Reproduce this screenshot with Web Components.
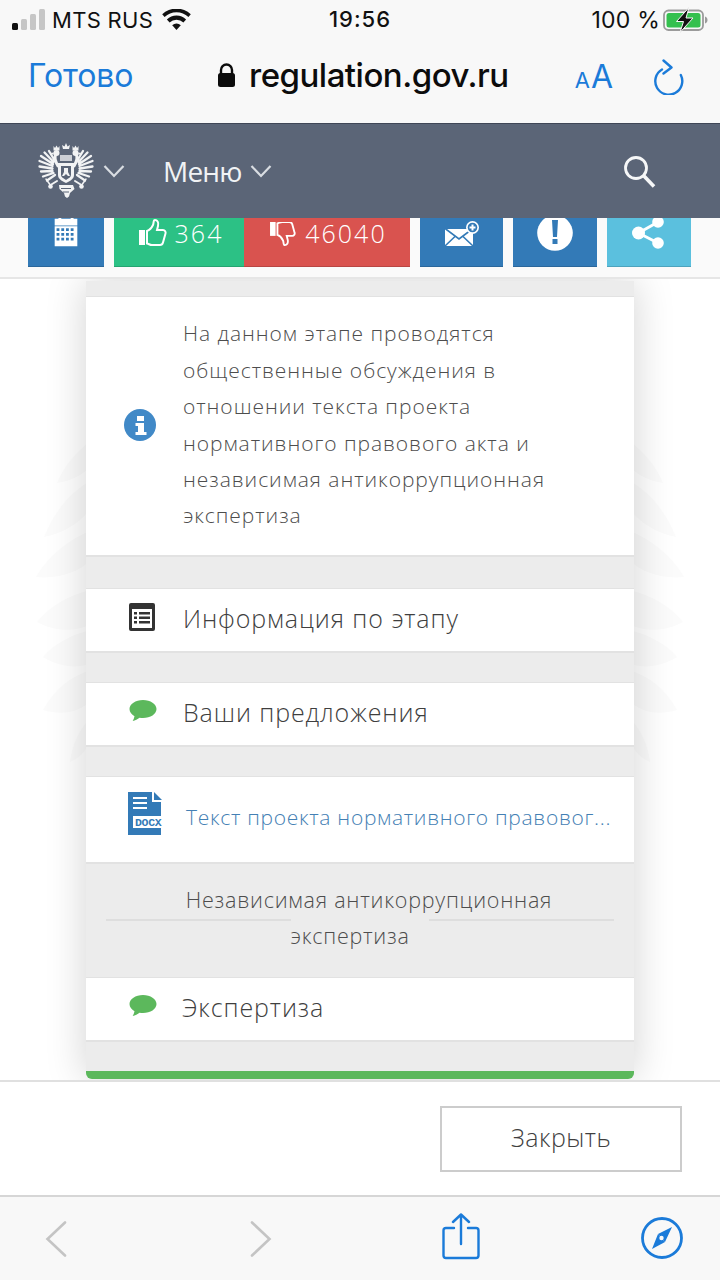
<!DOCTYPE html>
<html lang="ru">
<head>
<meta charset="UTF-8" />
<title>regulation.gov.ru</title>
<style>
  html, body { margin: 0; height: 100%; }
  body {
    width: 720px;
    height: 1280px;
    overflow: hidden;
    display: flex;
    flex-direction: column;
    font-family: "Open Sans", "Liberation Sans", sans-serif;
    background: #fff;
  }
</style>
</head>
<body>
  <ios-status></ios-status>
  <safari-top></safari-top>
  <site-header></site-header>
  <action-bar></action-bar>
  <modal-body>
    <stage-card>
      <card-spacer h="15"></card-spacer>
      <info-row></info-row>
      <card-spacer h="31"></card-spacer>
      <link-row icon="list">Информация по этапу</link-row>
      <card-spacer h="29"></card-spacer>
      <link-row icon="chat">Ваши предложения</link-row>
      <card-spacer h="29"></card-spacer>
      <doc-row>Текст проекта нормативного правовог...</doc-row>
      <section-title>Независимая антикоррупционная экспертиза</section-title>
      <link-row icon="chat" shift="-1">Экспертиза</link-row>
      <card-spacer h="29"></card-spacer>
      <green-bar></green-bar>
    </stage-card>
  </modal-body>
  <modal-footer></modal-footer>
  <safari-bottom></safari-bottom>

<script>
  // helper, every element has the same boilerplate
  function def(name, html) {
    customElements.define(name, class extends HTMLElement {
      constructor() {
        super();
        this.attachShadow({ mode: 'open' }).innerHTML = html;
      }
    });
  }

  const BLUE = '#1b7bd9';

  def('ios-status', `
    <style>
      :host { display: flex; height: 40px; background: #f8f8f8; padding: 0 11px 0 12px; box-sizing: border-box;
        align-items: center; justify-content: space-between; position: relative; color: #111;
        font: 400 22px "Inter", "Liberation Sans", sans-serif; }
      .l, .r { display: flex; align-items: center; }
      .carrier { margin-left: 7px; letter-spacing: .3px; }
      .wifi { margin-left: 9px; }
      .time { position: absolute; left: 0; right: 0; text-align: center; top: 6px; font-weight: 500; font-size: 22px; letter-spacing: 1px; }
      .pct { margin-right: 3px; font-size: 23px; letter-spacing: .2px; }
    </style>
    <div class="l">
      <svg width="33" height="22" viewBox="0 0 33 22">
        <rect x="0" y="14" width="6" height="7" rx="1.5" fill="#111"/>
        <rect x="9" y="10" width="6" height="11" rx="1.5" fill="#c6c6c6"/>
        <rect x="18" y="5" width="6" height="16" rx="1.5" fill="#c6c6c6"/>
        <rect x="27" y="0" width="6" height="21" rx="1.5" fill="#c6c6c6"/>
      </svg>
      <span class="carrier">MTS RUS</span>
      <svg class="wifi" width="29" height="22" viewBox="0 0 29 22">
        <path d="M14.5 21l-4.3-4.8a6 6 0 0 1 8.6 0z" fill="#111"/>
        <path d="M7.6 13.4a10 10 0 0 1 13.8 0l2.7-3a14 14 0 0 0-19.2 0z" fill="#111"/>
        <path d="M2.6 7.9a17.5 17.5 0 0 1 23.8 0l2.4-2.7a21 21 0 0 0-28.6 0z" fill="#111"/>
      </svg>
    </div>
    <div class="time">19:56</div>
    <div class="r">
      <span class="pct">100 %</span>
      <svg width="46" height="26" viewBox="0 0 46 26">
        <rect x="1" y="3.500" width="39" height="19.500" rx="4.500" fill="none" stroke="#9b9b9b" stroke-width="1.800"/>
        <rect x="3.500" y="6" width="34" height="14.500" rx="2.500" fill="#34c04e"/>
        <path d="M42 9.500v7c1.500-.4 2.500-1.800 2.500-3.500S43.500 9.900 42 9.500z" fill="#9b9b9b"/>
        <path d="M26 .5L13.500 14.500h7L17 25.500 30 11h-7z" fill="#111" stroke="#f8f8f8" stroke-width="1"/>
      </svg>
    </div>
  `);

  def('safari-top', `
    <style>
      :host { display: flex; height: 83px; background: #f8f8f8; align-items: center; position: relative;
        padding: 0 36px 10px 28px; box-sizing: border-box; font-family: "Inter", "Liberation Sans", sans-serif; }
      .done { color: ${BLUE}; font-size: 32px; letter-spacing: -.1px; margin-top: -2px; }
      .url { position: absolute; left: 217px; top: 15px; display: flex; align-items: center; gap: 13px; font-size: 33px; font-weight: 500; color: #0c0c0c; letter-spacing: -.5px; }
      .tools { margin-left: auto; display: flex; align-items: center; gap: 41px; color: ${BLUE}; }
      .aa { font-size: 32px; line-height: 1; margin-right: -2px; } .aa small { font-size: 22px; margin-right: 1px; }
    </style>
    <span class="done">Готово</span>
    <span class="url">
      <svg width="19" height="25" viewBox="0 0 19 25">
        <path d="M4 11V7a5.500 5.500 0 0 1 11 0v4" fill="none" stroke="#0c0c0c" stroke-width="2.400"/>
        <rect x="1" y="10" width="17" height="14" rx="2.500" fill="#0c0c0c"/>
      </svg>
      regulation.gov.ru
    </span>
    <span class="tools">
      <span class="aa"><small>A</small>A</span>
      <svg width="32" height="36" viewBox="0 0 32 36" fill="none" stroke="${BLUE}" stroke-width="2.400" stroke-linecap="round" stroke-linejoin="round">
        <path d="M10 10.500A13.500 13.500 0 1 0 28.800 16"/>
        <path d="M12.500 1.500l8 7-8 6" transform="translate(-1 0)"/>
      </svg>
    </span>
  `);

  // half of the eagle, the other half is the same thing mirrored
  const EAGLE_HALF = `
    <g fill="none" stroke="#f2f3f4" stroke-linecap="round">
      <g stroke-width="2.300">
        <path d="M17 19L11 9M15.500 20L6.500 10.500M15 22L3 14M14.500 24L1.500 19M14.500 26.500L1.500 24.500M14.500 29L3 29.500M15.500 31L5 34.500M17 33L9 38.500"/>
      </g>
      <path d="M20 24C17 19 16 15 18 12" stroke-width="3"/>
      <path d="M19 39L12.500 43" stroke-width="2"/>
      <path d="M13 44L8 37" stroke-width="1.500"/>
    </g>
    <circle cx="18.500" cy="11" r="3" fill="#f2f3f4"/>
    <path d="M16 10.500l-4 .5 3.500 2z" fill="#f2f3f4"/>
    <path d="M15.500 4l1.500 2 1.500-2.500 1.500 2.500 1.500-2v4.500h-6z" fill="#f2f3f4"/>
    <circle cx="12.500" cy="44.500" r="2.300" fill="#f2f3f4"/>
  `;

  def('site-header', `
    <style>
      :host { display: flex; height: 95px; background: #5b6577; border-top: 1px solid #3f4656; box-sizing: border-box;
        align-items: center; padding: 0 64px 0 38px; color: #f1f3f5; position: relative; z-index: 2;
        font: 400 28px "Open Sans", "Liberation Sans", sans-serif; }
      .chev { margin-left: 9px; }
      .menu { margin-left: 38px; letter-spacing: -.8px; }
      .menu + .chev { margin-left: 8px; }
      .search { margin-left: auto; }
    </style>
    <svg width="56" height="56" viewBox="0 0 56 56" style="margin-top:-2px">
      <g>${EAGLE_HALF}</g>
      <g transform="translate(56 0) scale(-1 1)">${EAGLE_HALF}</g>
      <path d="M25 7l-1-4 2.500 1.500L28 1l1.500 3.500L32 3l-1 4z" fill="#f2f3f4"/>
      <path d="M22 13h12v6H22z" fill="#f2f3f4" opacity=".75"/>
      <path d="M20 21h16v12c0 4-4 6-8 8-4-2-8-4-8-8z" fill="#f2f3f4"/>
      <path d="M23 24h10v9c0 2-2.500 3.500-5 5-2.500-1.500-5-3-5-5z" fill="#5b6577"/>
      <path d="M26 26h4v4l2 4h-2l-2-2-2 2h-2l2-4z" fill="#f2f3f4"/>
      <path d="M21 43h14l1.500 4-4.500 4-1 3.500-2 1.500-2-1.500-1-3.500-4.500-4z" fill="#f2f3f4"/>
      <path d="M23 46.500h10M25 50h6" stroke="#5b6577" stroke-width="1" fill="none"/>
    </svg>
    <svg class="chev" width="22" height="14" viewBox="0 0 22 14"><path d="M1.500 2l9.500 10 9.500-10" fill="none" stroke="#d9dde2" stroke-width="2.200"/></svg>
    <span class="menu">Меню</span>
    <svg class="chev" width="22" height="14" viewBox="0 0 22 14"><path d="M1.500 2l9.500 10 9.500-10" fill="none" stroke="#d9dde2" stroke-width="2.200"/></svg>
    <svg class="search" width="33" height="33" viewBox="0 0 33 33" fill="none" stroke="#f6f7f8" stroke-width="2.800">
      <circle cx="13" cy="13" r="10.500"/><path d="M20.500 20.500L31 31.500" stroke-width="3.600"/>
    </svg>
  `);

  def('action-bar', `
    <style>
      :host { display: flex; height: 61px; background: #fafafa; border-bottom: 2px solid #e6e6e6; box-sizing: border-box;
        padding: 0 29px 0 28px; gap: 10px; align-items: flex-start; color: #fff;
        font: 300 25px "Open Sans", "Liberation Sans", sans-serif; letter-spacing: 2px; }
      .b { height: 49px; display: flex; justify-content: center; box-sizing: border-box; border-bottom: 1px solid rgba(0,0,0,.15); align-items: flex-start; overflow: hidden; }
      .cal { width: 76px; background: #337ab7; }
      .vote { display: flex; }
      .up { width: 130px; background: #2cc185; padding-left: 4px; }
      .down { width: 166px; background: #d9534f; padding-left: 2px; }
      .mail { width: 83px; background: #337ab7; }
      .warn { width: 84px; background: #337ab7; }
      .share { width: 84px; background: #5bc0de; }
      .vote .b { gap: 8px; overflow: visible; }
      .vote span { line-height: 34px; margin-top: -2px; }
      svg { display: block; flex: none; }
    </style>
    <div class="b cal">
      <svg width="26" height="33" viewBox="0 0 26 35" fill="#fff" style="margin-top:-2px">
        <path d="M1 3h4V0h3v3h10V0h3v3h4v7H1z"/>
        <path fill-rule="evenodd" d="M1 11h24v21H1zM3 13v3h3v-3zM8 13v3h3v-3zM13 13v3h3v-3zM18 13v3h3v-3zM3 18v3h3v-3zM8 18v3h3v-3zM13 18v3h3v-3zM18 18v3h3v-3zM3 23v3h3v-3zM8 23v3h3v-3zM13 23v3h3v-3zM18 23v3h3v-3z"/>
      </svg>
    </div>
    <div class="vote">
      <div class="b up">
        <svg width="28" height="27" viewBox="0 0 28 27" style="margin-top:1px" fill="none" stroke="#fff" stroke-width="2">
          <rect x="0" y="11" width="6" height="15" fill="#fff" stroke="none"/>
          <path d="M8 12c3-1 5-4 6-6s0-5 2-5 4 2 3 6l-1 4h6c2 0 3 2 2.500 3.500l-2.500 9c-.4 1.500-1.500 2.500-3 2.500h-8c-2 0-3-1-5-1.500z"/>
        </svg>
        <span>364</span>
      </div>
      <div class="b down">
        <svg width="28" height="25" viewBox="0 0 28 27" style="margin-top:4px" fill="none" stroke="#fff" stroke-width="2">
          <rect x="0" y="0" width="6" height="15" fill="#fff" stroke="none"/>
          <path d="M8 14c3 1 5 4 6 6s0 5 2 5 4-2 3-6l-1-4h6c2 0 3-2 2.500-3.500l-2.500-9c-.4-1.500-1.500-2.500-3-2.500h-8c-2 0-3 1-5 1.500z"/>
        </svg>
        <span>46040</span>
      </div>
    </div>
    <div class="b mail">
      <svg width="34" height="26" viewBox="0 0 34 26" style="margin-top:3px">
        <path d="M0 8h28v17H0z" fill="#fff"/>
        <path d="M0 7.500L14 18 28 7.500M0 25l10-9.500M28 25l-10-9.500" fill="none" stroke="#337ab7" stroke-width="1.600"/>
        <circle cx="27.500" cy="6.500" r="6.500" fill="#fff"/>
        <circle cx="27.500" cy="6.500" r="4.800" fill="#337ab7"/>
        <path d="M26.500 3.500h2v2h2v2h-2v2h-2v-2h-2v-2h2z" fill="#fff"/>
      </svg>
    </div>
    <div class="b warn">
      <svg width="36" height="33" viewBox="0 0 36 33"><circle cx="18" cy="15" r="17.800" fill="#fff"/><path d="M15 2h6l-1 17h-4zM15.500 21h5v5h-5z" fill="#337ab7"/></svg>
    </div>
    <div class="b share">
      <svg width="34" height="32" viewBox="0 0 34 32" fill="#fff">
        <circle cx="6.500" cy="15" r="6.500"/><circle cx="26" cy="4" r="5.800"/><circle cx="26" cy="25" r="5.800"/>
        <path d="M6.500 15L26 4M6.500 15L26 25" stroke="#fff" stroke-width="3"/>
      </svg>
    </div>
  `);

  // faint leaves behind the card, same shapes both sides
  const LEAVES = `
    <path d="M92 440C76 452 64 466 57 483c14-2 26-8 35-18z"/>
    <path d="M92 480C70 492 54 512 44 537c20-4 36-14 48-30z"/>
    <path d="M92 530C68 540 48 556 36 577c22 2 42-4 56-18z"/>
    <path d="M92 590C70 594 50 606 37 622c18 10 38 10 55 2z"/>
    <path d="M92 630C72 634 54 644 43 657c16 10 34 12 49 6z"/>
    <path d="M92 670C70 676 54 690 43 710c20 6 36 2 49-10z"/>
    <path d="M92 716C80 728 72 744 70 762c10-4 16-12 22-22z"/>
  `;

  def('modal-body', `
    <style>
      :host { display: block; height: 803px; background: #fff; position: relative; overflow: hidden; border-bottom: 2px solid #e0e0e0; box-sizing: border-box; }
      .wm { position: absolute; left: 0; top: 0; width: 720px; height: 801px; }
      .slot { position: relative; padding-top: 2px; display: flex; justify-content: center; }
    </style>
    <svg class="wm" viewBox="0 279 720 801" fill="#fbfbfb">
      <g>${LEAVES}</g>
      <g transform="translate(720 0) scale(-1 1)">${LEAVES}</g>
    </svg>
    <div class="slot"><slot></slot></div>
  `);

  def('stage-card', `
    <style>
      :host { display: flex; flex-direction: column; width: 548px; background: #ececec; box-shadow: 0 0 40px rgba(0,0,0,.18); position: relative; border-radius: 0 0 6px 6px; }
    </style>
    <slot></slot>
  `);

  customElements.define('card-spacer', class extends HTMLElement {
    constructor() {
      super();
      const h = this.getAttribute('h');
      this.attachShadow({ mode: 'open' }).innerHTML = `<style>:host { display: block; height: ${h}px; }</style>`;
    }
  });

  def('info-row', `
    <style>
      :host { display: flex; align-items: center; height: 261px; box-sizing: border-box; background: #fff;
        border-top: 1px solid #e2e2e2; border-bottom: 2px solid #e2e2e2; padding: 0 60px 0 38px; color: #4d4d4d;
        font: 300 21px/36.4px "Open Sans", "Liberation Sans", sans-serif; letter-spacing: .95px; }
      svg { flex: none; margin-right: 27px; margin-top: -2px; }
      div { margin-top: -3px; }
    </style>
    <svg width="32" height="32" viewBox="0 0 32 32">
      <circle cx="16" cy="16" r="16" fill="#4189c7"/>
      <path d="M12.500 7h7v5h-7zM11 14h8.500v9H22v3H11v-3h2.500v-6H11z" fill="#fff" transform="translate(.5 0)"/>
    </svg>
    <div>На данном этапе проводятся общественные обсуждения в отношении текста проекта нормативного правового акта и независимая антикоррупционная экспертиза</div>
  `);

  const ICONS = {
    list: `<svg width="26" height="28" viewBox="0 0 26 28"><path fill-rule="evenodd" d="M2 0h22a2 2 0 0 1 2 2v24a2 2 0 0 1-2 2H2a2 2 0 0 1-2-2V2a2 2 0 0 1 2-2zM3 6v19h20V6z" fill="#333"/><path d="M5 9h3v2.500H5zM10 9h11v2.500H10zM5 13.500h3V16H5zM10 13.500h11V16H10zM5 18h3v2.500H5zM10 18h11v2.500H10z" fill="#333"/></svg>`,
    chat: `<svg width="28" height="22" viewBox="0 0 28 22"><path d="M14 0C6.500 0 .5 4 .5 9c0 3 2 5.500 5 7.200-.3 1.800-1 3.300-1.800 4.800 2.500-.5 5-2 6.800-3.300 1.200.2 2.300.3 3.500.3 7.500 0 13.500-4 13.500-9S21.500 0 14 0z" fill="#5cb85c"/></svg>`
  };

  customElements.define('link-row', class extends HTMLElement {
    constructor() {
      super();
      const ic = ICONS[this.getAttribute('icon')];
      const shift = +(this.getAttribute('shift') || 0);
      this.attachShadow({ mode: 'open' }).innerHTML = `
        <style>
          :host { display: flex; align-items: center; height: 65px; box-sizing: border-box; background: #fff;
            border-top: 1px solid #e2e2e2; border-bottom: 2px solid #e2e2e2; color: #3f3f3f;
            font: 300 25px "Open Sans", "Liberation Sans", sans-serif; letter-spacing: .9px; }
          .i { width: 97px; padding-left: 43px; box-sizing: border-box; flex: none; display: flex; margin-top: -6px; }
          span { margin-left: ${shift}px; margin-top: -5px; }
        </style>
        <div class="i">${ic}</div><span><slot></slot></span>`;
    }
  });

  def('doc-row', `
    <style>
      :host { display: flex; align-items: center; height: 88px; box-sizing: border-box; background: #fff;
        border-top: 1px solid #e2e2e2; border-bottom: 2px solid #e2e2e2; color: #4480b4; padding-left: 42px;
        font: 300 21px "Open Sans", "Liberation Sans", sans-serif; letter-spacing: .7px; white-space: nowrap; }
      svg { flex: none; margin-right: 21px; margin-top: -13px; }
      span { display: block; margin-top: -6px; }
    </style>
    <svg width="37" height="43" viewBox="0 0 37 43">
      <path d="M0 0h24v10h9v33H0z" fill="#337ab7"/>
      <path d="M26 0l8 8h-8z" fill="#337ab7"/>
      <path d="M5 5h14v2H5zM5 10h14v2H5zM5 15h14v2H5z" fill="#fff"/>
      <rect x="5" y="24" width="28" height="12" fill="#fff"/>
      <text x="7" y="34" font-family="Liberation Mono, monospace" font-weight="700" font-size="11.500" letter-spacing="-.3" fill="#337ab7">DOCX</text>
    </svg>
    <span><slot></slot></span>
  `);

  def('section-title', `
    <style>
      :host { display: block; height: 113px; box-sizing: border-box; padding: 18px 30px 0; position: relative; text-align: center;
        color: #4d4d4d; font: 300 21.500px/36.4px "Open Sans", "Liberation Sans", sans-serif; letter-spacing: .75px; }
      .rule { position: absolute; top: 55px; height: 2px; background: #dedede; width: 185px; }
      .rule.l { left: 20px; } .rule.r { right: 20px; }
      .txt { position: relative; }
      .txt::before { content: ""; display: inline-block; width: 18px; }
      .txt::after { content: ""; display: inline-block; width: 20px; }
    </style>
    <div class="rule l"></div><div class="rule r"></div>
    <div class="txt"><slot></slot></div>
  `);

  def('green-bar', `
    <style>:host { display: block; height: 8px; background: #5cb85c; border-radius: 0 0 6px 6px; }</style>
  `);

  def('modal-footer', `
    <style>
      :host { display: flex; height: 113px; justify-content: flex-end; align-items: center; padding-right: 38px; background: #fff; box-sizing: border-box; }
      .btn { width: 242px; height: 66px; box-sizing: border-box; border: 2px solid #ccc; padding-bottom: 4px; display: flex; align-items: center; justify-content: center;
        color: #3f3f3f; font: 300 25px "Open Sans", "Liberation Sans", sans-serif; letter-spacing: .5px; }
    </style>
    <div class="btn">Закрыть</div>
  `);

  def('safari-bottom', `
    <style>
      :host { display: flex; height: 85px; background: #f8f8f8; border-top: 2px solid #d6d6d6; box-sizing: border-box; position: relative; }
      svg { position: absolute; }
    </style>
    <svg style="left:45px;top:24px" width="22" height="36" viewBox="0 0 22 36"><path d="M20 1.500L2.500 18 20 34.500" fill="none" stroke="#c4c4c4" stroke-width="2.600" stroke-linecap="round"/></svg>
    <svg style="left:250px;top:24px" width="22" height="36" viewBox="0 0 22 36"><path d="M2 1.500L19.500 18 2 34.500" fill="none" stroke="#c4c4c4" stroke-width="2.600" stroke-linecap="round"/></svg>
    <svg style="left:442px;top:16px" width="38" height="48" viewBox="0 0 38 48" fill="none" stroke="${BLUE}" stroke-width="2.400" stroke-linecap="round" stroke-linejoin="round">
      <path d="M19 2v29M11 9l8-7.500L27 9"/>
      <path d="M12 15H4a2.500 2.500 0 0 0-2.500 2.500V42.500A2.500 2.500 0 0 0 4 45h30a2.500 2.500 0 0 0 2.500-2.500V17.500A2.500 2.500 0 0 0 34 15h-8"/>
    </svg>
    <svg style="left:640px;top:19px" width="44" height="44" viewBox="0 0 44 44">
      <circle cx="22" cy="22" r="19.500" fill="none" stroke="${BLUE}" stroke-width="2.800"/>
      <path d="M32 11L25 26 18 18z" fill="${BLUE}"/>
      <path d="M12 33l6-15 7 8z" fill="${BLUE}"/>
      <circle cx="21.500" cy="22" r="2.200" fill="#f8f8f8"/>
    </svg>
  `);
</script>
</body>
</html>
